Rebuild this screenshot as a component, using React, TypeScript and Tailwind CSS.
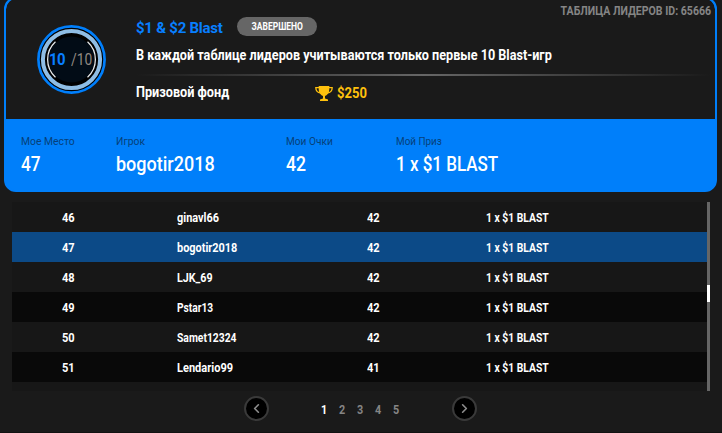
import { ChevronLeft, ChevronRight } from 'lucide-react';

interface Row { place: number; player: string; points: number; scale: string; }

const rows: Row[] = [
  { place: 46, player: 'ginavl66', points: 42, scale: 'scale-x-[0.91]' },
  { place: 47, player: 'bogotir2018', points: 42, scale: 'scale-x-[0.91]' },
  { place: 48, player: 'LJK_69', points: 42, scale: 'scale-x-[0.89]' },
  { place: 49, player: 'Pstar13', points: 42, scale: 'scale-x-[0.85]' },
  { place: 50, player: 'Samet12324', points: 42, scale: 'scale-x-[0.86]' },
  { place: 51, player: 'Lendario99', points: 41, scale: 'scale-x-[0.92]' },
];

const summary = [
  { label: 'Мое Место', value: '47', width: 'w-[95px]', scale: 'scale-x-[0.86]', labelScale: 'scale-x-[0.94]' },
  { label: 'Игрок', value: 'bogotir2018', width: 'w-[170px]', scale: 'scale-x-[0.9]', labelScale: 'scale-x-[0.94]' },
  { label: 'Мои Очки', value: '42', width: 'w-[110px]', scale: 'scale-x-[0.88]', labelScale: 'scale-x-[0.92]' },
  { label: 'Мой Приз', value: '1 x $1 BLAST', width: 'w-[200px]', scale: 'scale-x-[0.85]', labelScale: 'scale-x-[0.9]' },
];

function Progress() {
  return (
    <div className="relative w-[69px] h-[69px]">
      <svg className="absolute inset-0" width="69" height="69" viewBox="0 0 69 69" fill="none">
        <circle cx="34.5" cy="34.5" r="34" fill="#000" />
        <circle cx="34.5" cy="34.5" r="33.1" stroke="#007ffc" strokeWidth="2.7" />
        <circle cx="34.5" cy="34.5" r="28.6" stroke="#8fbde4" strokeWidth="4" />
        <circle cx="34.5" cy="34.5" r="23" fill="#020c16" />
        <path d="M18.2 17.1a23.8 23.8 0 0 0 0 34.8M50.8 17.1a23.8 23.8 0 0 1 0 34.8" stroke="#e4e7e9" strokeWidth="1.3" strokeLinecap="round" />
      </svg>
      <div className="absolute inset-0 pl-[12px] pt-px flex items-center text-[16px] leading-none">
        <span className="w-[22px] font-bold text-[#087fff] origin-left scale-x-[0.93] tracking-[-0.5px]">10</span>
        <span className="origin-left scale-x-[0.86] text-[#918982]">/10</span>
      </div>
    </div>
  );
}

function Trophy() {
  return (
    <svg width="18" height="15" viewBox="0 0 18 15" fill="#ffc10d">
      <path d="M3.700 0h10.600v3.500C14.300 7 12 9.200 10 10v2.500l3 1V15H5v-1.500l3-1V10C6 9.200 3.700 7 3.700 3.500z" />
      <path d="M4.500 1.600H.8c0 3.200 2 5.200 5 5.500M13.500 1.600h3.700c0 3.200-2 5.200-5 5.500" fill="none" stroke="#ffc10d" strokeWidth="1.300" />
    </svg>
  );
}

export default function App() {
  return (
    <div className="w-[722px] h-[433px] overflow-hidden bg-[#1a1a1a] text-white border-b border-[#121212] font-['Roboto','Liberation_Sans',sans-serif]">
      <div className="-mt-[3px] ml-1 w-[713px] h-[195px] rounded-[12px] border-2 border-[#007ffa] bg-[#007ffa] overflow-hidden">
        <div className="h-[120px] bg-[#1a1a1a] rounded-t-[10px] flex">
          <div className="w-[130px] shrink-0 pl-[31px] pt-[26px]"><Progress /></div>
          <div className="flex-1">
            <div className="flex h-[45px]">
              <h1 className="w-[101px] pt-[19px] text-[15px] leading-5 font-bold text-[#087fff] whitespace-nowrap tracking-[-0.25px]">$1 &amp; $2 Blast</h1>
              <div className="mt-[18px] w-20 h-[19px] rounded-full bg-[#666] flex items-center justify-center text-[10px] leading-none font-bold pt-px"><span className="scale-x-[0.85]">ЗАВЕРШЕНО</span></div>
              <div className="flex-1 pr-[4px] pt-[2px] flex justify-end text-[12.5px] leading-5 font-bold text-[#858585] whitespace-nowrap"><span className="shrink-0 origin-right scale-x-[0.845]">ТАБЛИЦА ЛИДЕРОВ ID: 65666</span></div>
            </div>
            <p className="h-[30px] pt-px text-[14px] leading-5 font-bold whitespace-nowrap"><span className="inline-block origin-left scale-x-[0.902]">В каждой таблице лидеров учитываются только первые 10 Blast-игр</span></p>
            <div className="h-[2px] mr-[4px] bg-linear-to-r from-transparent via-[#666] to-transparent"></div>
            <div className="flex pt-[6px] text-[14px] leading-5 font-bold">
              <div className="w-[179px] whitespace-nowrap"><span className="inline-block origin-left scale-x-[0.905]">Призовой фонд</span></div>
              <div className="flex items-center gap-[4px] pt-px text-[#ffc10d]"><Trophy /><span className="origin-left scale-x-[0.93]">$250</span></div>
            </div>
          </div>
        </div>
        <div className="flex pl-[15px] pt-[14px]">
          {summary.map(item => (
            <div key={item.label} className={`shrink-0 ${item.width}`}>
              <div className="pt-px text-[11px] leading-4 text-[#063f79]"><span className={`inline-block origin-left ${item.labelScale}`}>{item.label}</span></div>
              <div className={`text-[20px] leading-7 font-medium whitespace-nowrap w-fit origin-left ${item.scale}`}>{item.value}</div>
            </div>
          ))}
        </div>
      </div>

      <div className="mt-[10px] ml-3 flex h-[189px] w-[698px]">
        <div className="w-[695px] bg-[#171717] text-[12px] font-bold">
          {rows.map((row, i) => (
            <div key={row.place} className={`h-[30px] flex items-center pl-[50px] pt-[2px] ${row.place === 47 ? 'bg-[#0c4a87]' : i % 2 ? 'bg-[#090909]' : 'bg-[#171717]'}`}>
              <div className="w-[115px]"><span className="inline-block origin-left scale-x-[0.92]">{row.place}</span></div>
              <div className="w-[190px]"><span className={`inline-block origin-left ${row.scale}`}>{row.player}</span></div>
              <div className="w-[119px]"><span className="inline-block origin-left scale-x-[0.92]">{row.points}</span></div>
              <div className="origin-left scale-x-[0.86]">1 x $1 BLAST</div>
            </div>
          ))}
        </div>
        <div className="w-[3px] bg-[#666] pt-[83px]">
          <div className="h-[17px] bg-white"></div>
        </div>
      </div>

      <div className="mt-[5px] ml-[244px] flex w-[233px] h-[25px] items-center justify-between">
        <button className="w-[25px] h-[25px] rounded-full border-2 border-[#3a3a3a] bg-black flex items-center justify-center text-[#8d8d8d]"><ChevronLeft size={15} strokeWidth={2.6} /></button>
        <div className="flex pt-[2px] pr-[2px] text-[12px] font-bold text-[#858585]">
          {[1, 2, 3, 4, 5].map(page => (
            <span key={page} className={`w-[18px] text-center scale-x-[0.9] ${page === 1 ? 'text-white' : ''}`}>{page}</span>
          ))}
        </div>
        <button className="w-[25px] h-[25px] rounded-full border-2 border-[#3a3a3a] bg-black flex items-center justify-center text-[#8d8d8d]"><ChevronRight size={15} strokeWidth={2.6} /></button>
      </div>
    </div>
  );
}
